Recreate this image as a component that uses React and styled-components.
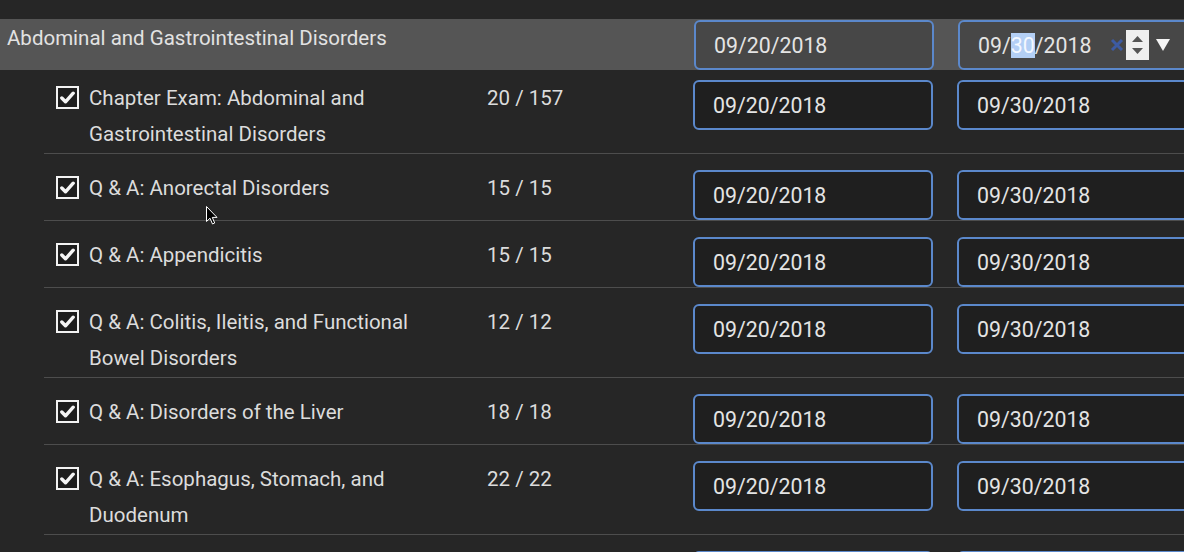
import React from "react";
import styled, { createGlobalStyle } from "styled-components";

const GlobalStyle = createGlobalStyle`
  html, body {
    margin: 0;
    padding: 0;
    background: #262626;
    overflow: hidden;
  }
  body {
    font-family: Roboto, "Noto Sans", "Liberation Sans", sans-serif;
    color: #dedede;
  }
`;

const Page = styled.div`
  position: relative;
  width: 1184px;
  height: 552px;
  padding-top: 19px;
  box-sizing: border-box;
  overflow: hidden;
`;

const HeaderRow = styled.div`
  display: grid;
  grid-template-columns: 694px 240px 264px;
  background: #555555;
  height: 51px;
  padding-top: 1px;
  box-sizing: border-box;
`;

const HeaderTitle = styled.div`
  box-sizing: border-box;
  padding-left: 7px;
  font-size: 20.5px;
  line-height: 36px;
  color: #e2e2e2;
`;

const DateBox = styled.div`
  box-sizing: border-box;
  height: 50px;
  margin-left: ${(p) => (p.$second ? 24 : 0)}px;
  border: 2px solid #5b88cb;
  border-radius: 6px;
  background: ${(p) => (p.$header ? "#474747" : "#1f1f1f")};
  display: flex;
  align-items: center;
  padding-left: 18px;
  font-size: 21.3px;
  color: #e4e4e4;
  white-space: nowrap;
`;

const Selected = styled.span`
  background: #b3cff5;
  color: #f4f8ff;
`;

const Controls = styled.div`
  display: flex;
  align-items: center;
  margin-left: 16px;
`;

const Clear = styled.span`
  width: 19px;
  display: flex;
  justify-content: center;
`;

const Spinner = styled.span`
  width: 23px;
  height: 30px;
  background: #efefef;
  display: flex;
  flex-direction: column;
  align-items: center;
  justify-content: center;
  gap: 6px;
`;

const Drop = styled.span`
  margin-left: 7px;
  display: flex;
`;

const List = styled.div`
  margin-left: 44px;
`;

const Row = styled.div`
  display: grid;
  grid-template-columns: 431px 206px 240px 264px;
  align-items: start;
  padding-top: ${(p) => (p.$first ? 10 : 16)}px;
  padding-left: 12px;
  border-bottom: 1px solid #4d4d4d;
`;

const TitleCell = styled.div`
  display: flex;
  align-items: flex-start;
  gap: 10px;
  padding-bottom: 1px;
`;

const Check = styled.span`
  flex: none;
  box-sizing: border-box;
  width: 23px;
  height: 23px;
  margin-top: 6px;
  border: 2px solid #f2f2f2;
  background: #1d1d1d;
  display: flex;
  align-items: center;
  justify-content: center;
`;

const Title = styled.div`
  width: 360px;
  font-size: 20.5px;
  line-height: 36px;
  color: #dcdcdc;
`;

const Count = styled.div`
  font-size: 20.5px;
  line-height: 36px;
  color: #dcdcdc;
`;

const Cursor = styled.svg`
  position: absolute;
  left: 206px;
  top: 206px;
`;

const items = [
  { title: "Chapter Exam: Abdominal and Gastrointestinal Disorders", count: "20 / 157" },
  { title: "Q & A: Anorectal Disorders", count: "15 / 15" },
  { title: "Q & A: Appendicitis", count: "15 / 15" },
  { title: "Q & A: Colitis, Ileitis, and Functional Bowel Disorders", count: "12 / 12" },
  { title: "Q & A: Disorders of the Liver", count: "18 / 18" },
  { title: "Q & A: Esophagus, Stomach, and Duodenum", count: "22 / 22" },
  { title: "Q & A: Gallbladder and Bile Ducts", count: "10 / 10" },
];

function CheckMark() {
  return (
    <svg width="15" height="13" viewBox="0 0 15 13">
      <path d="M1.8 7 L5.5 10.8 L13.2 2.2" fill="none" stroke="#f4f4f4" strokeWidth="3.4" strokeLinecap="round" strokeLinejoin="round" />
    </svg>
  );
}

export default function App() {
  return (
    <>
      <GlobalStyle />
      <Page>
        <HeaderRow>
          <HeaderTitle>Abdominal and Gastrointestinal Disorders</HeaderTitle>
          <DateBox $header>09/20/2018</DateBox>
          <DateBox $header $second>
            09/<Selected>30</Selected>/2018
            <Controls>
              <Clear>
                <svg width="14" height="14" viewBox="0 0 14 14">
                  <path d="M2 2 L12 12 M12 2 L2 12" stroke="#3d5ba3" strokeWidth="3" />
                </svg>
              </Clear>
              <Spinner>
                <svg width="11" height="6" viewBox="0 0 11 6">
                  <path d="M0 6 L5.5 0 L11 6 Z" fill="#555" />
                </svg>
                <svg width="11" height="6" viewBox="0 0 11 6">
                  <path d="M0 0 L5.5 6 L11 0 Z" fill="#555" />
                </svg>
              </Spinner>
              <Drop>
                <svg width="14" height="12" viewBox="0 0 14 12">
                  <path d="M0 0 L14 0 L7 12 Z" fill="#f4f4f4" />
                </svg>
              </Drop>
            </Controls>
          </DateBox>
        </HeaderRow>
        <List>
          {items.map((it, i) => (
            <Row key={i} $first={i === 0}>
              <TitleCell>
                <Check>
                  <CheckMark />
                </Check>
                <Title>{it.title}</Title>
              </TitleCell>
              <Count>{it.count}</Count>
              <DateBox>09/20/2018</DateBox>
              <DateBox $second>09/30/2018</DateBox>
            </Row>
          ))}
        </List>
        <Cursor width="12" height="19" viewBox="0 0 12 19">
          <path d="M0.5 0.5 L0.5 15.5 L4 12.2 L6.5 18 L8.7 17 L6.3 11.4 L11 11.4 Z" fill="#000" stroke="#fff" strokeWidth="1" />
        </Cursor>
      </Page>
    </>
  );
}
